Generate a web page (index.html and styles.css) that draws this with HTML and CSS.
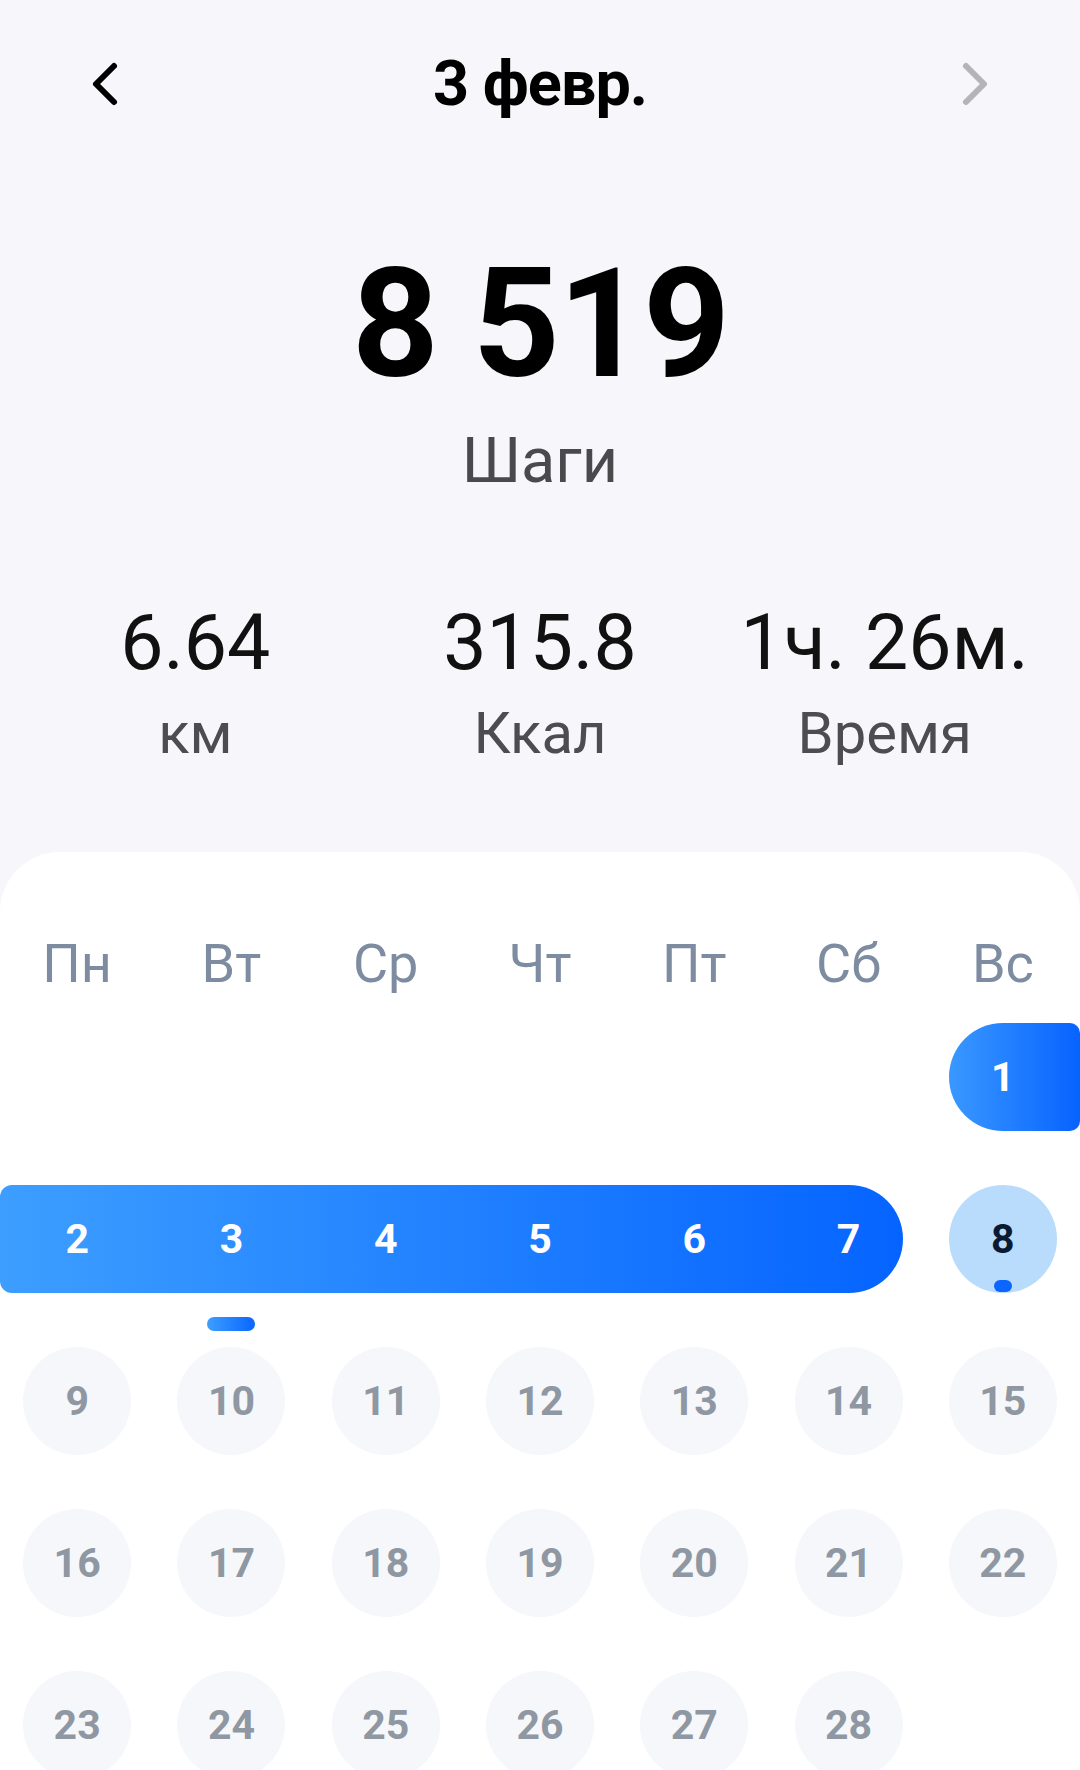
FILE: index.html
```html
<!DOCTYPE html>
<html lang="ru">
<head>
    <meta charset="UTF-8">
    <meta name="viewport" content="width=device-width, initial-scale=1.0">
    <title>Шаги</title>
    <link rel="stylesheet" href="styles.css">
</head>
<body>
    <header class="topbar">
        <button class="nav-arrow">
            <svg width="30" height="46" viewBox="0 0 30 46"><path d="M24 5 L6 23 L24 41" /></svg>
        </button>
        <h1 class="date-title">3 февр.</h1>
        <button class="nav-arrow disabled">
            <svg width="30" height="46" viewBox="0 0 30 46"><path d="M6 5 L24 23 L6 41" /></svg>
        </button>
    </header>

    <section class="summary">
        <div class="steps-count">8 519</div>
        <div class="steps-label">Шаги</div>
    </section>

    <section class="stats">
        <div class="stat">
            <div class="stat-value">6.64</div>
            <div class="stat-label">км</div>
        </div>
        <div class="stat">
            <div class="stat-value">315.8</div>
            <div class="stat-label">Ккал</div>
        </div>
        <div class="stat">
            <div class="stat-value">1ч. 26м.</div>
            <div class="stat-label">Время</div>
        </div>
    </section>

    <section class="calendar">
        <div class="weekdays">
            <span>Пн</span><span>Вт</span><span>Ср</span><span>Чт</span><span>Пт</span><span>Сб</span><span>Вс</span>
        </div>

        <div class="week">
            <div class="range range-tail">
                <div class="day">1</div>
            </div>
        </div>

        <div class="week">
            <div class="range range-head">
                <div class="day">2</div>
                <div class="day selected">3</div>
                <div class="day">4</div>
                <div class="day">5</div>
                <div class="day">6</div>
                <div class="day">7</div>
            </div>
            <div class="day today">8</div>
        </div>

        <div class="week">
            <div class="day empty">9</div>
            <div class="day empty">10</div>
            <div class="day empty">11</div>
            <div class="day empty">12</div>
            <div class="day empty">13</div>
            <div class="day empty">14</div>
            <div class="day empty">15</div>
        </div>

        <div class="week">
            <div class="day empty">16</div>
            <div class="day empty">17</div>
            <div class="day empty">18</div>
            <div class="day empty">19</div>
            <div class="day empty">20</div>
            <div class="day empty">21</div>
            <div class="day empty">22</div>
        </div>

        <div class="week">
            <div class="day empty">23</div>
            <div class="day empty">24</div>
            <div class="day empty">25</div>
            <div class="day empty">26</div>
            <div class="day empty">27</div>
            <div class="day empty">28</div>
        </div>
    </section>
</body>
</html>
```

FILE: styles.css
```css
html, body {
    margin: 0;
    padding: 0;
}
body {
    width: 1080px;
    height: 1770px;
    overflow: hidden;
    background-color: #f7f7fb;
    font-family: Roboto, "Noto Sans", "Liberation Sans", sans-serif;
    color: #000;
}

/* header */
.topbar {
    display: flex;
    align-items: center;
    justify-content: space-between;
    padding: 52px 90px 0;
}
.nav-arrow {
    border: none;
    background: none;
    padding: 0;
    width: 30px;
    height: 46px;
    display: block;
}
.nav-arrow svg {
    display: block;
}
.nav-arrow path {
    fill: none;
    stroke: #000;
    stroke-width: 6;
    stroke-linecap: round;
    stroke-linejoin: round;
}
.nav-arrow.disabled path {
    stroke: #b4b4b9;
}
.date-title {
    margin: 0;
    font-size: 63px;
    line-height: 1;
    font-weight: 700;
    letter-spacing: -1px;
}

/* steps */
.summary {
    text-align: center;
}
.steps-count {
    margin-top: 133px;
    font-size: 152px;
    line-height: 1;
    font-weight: 700;
    letter-spacing: -2px;
}
.steps-label {
    margin-top: 29px;
    font-size: 63px;
    line-height: 1;
    color: #4a4a4c;
}

/* stats row */
.stats {
    display: grid;
    grid-template-columns: repeat(3, 1fr);
    padding: 0 23px;
    margin-top: 113px;
    text-align: center;
}
.stat-value {
    font-size: 77px;
    line-height: 1;
    color: #111;
}
.stat-label {
    margin-top: 22px;
    font-size: 58px;
    line-height: 1;
    color: #4d4d50;
}

/* calendar card */
.calendar {
    box-sizing: border-box;
    margin-top: 90px;
    background-color: #fff;
    border-radius: 60px 60px 0 0;
    padding-top: 84px;
    height: 918px;
    overflow: hidden;
}
.weekdays {
    display: grid;
    grid-template-columns: repeat(7, 1fr);
    text-align: center;
    font-size: 54px;
    line-height: 1;
    color: #7d8ca0;
    padding-top: 1px;
}
.week {
    display: grid;
    grid-template-columns: repeat(7, 1fr);
    height: 108px;
    margin-top: 54px;
}
.weekdays + .week {
    margin-top: 32px;
}
.day {
    position: relative;
    display: flex;
    align-items: center;
    justify-content: center;
    width: 108px;
    height: 108px;
    justify-self: center;
    border-radius: 50%;
    font-size: 41px;
    font-weight: 700;
    line-height: 1;
}
.day.empty {
    background-color: #f6f7fa;
    color: #8f97a2;
}
.day.today {
    background-color: #b9dcfd;
    color: #0b1a33;
}
.day.today::after {
    content: "";
    position: absolute;
    bottom: 1px;
    left: 45px;
    width: 18px;
    height: 12px;
    border-radius: 6px;
    background-color: #0a66ff;
}

/* selected range */
.range {
    background: linear-gradient(90deg, #3d9eff, #0564ff);
    color: #fff;
    height: 108px;
}
.range-head {
    grid-column: 1 / 7;
    margin-right: 23px;
    border-radius: 12px 54px 54px 12px;
    display: grid;
    grid-template-columns: repeat(6, calc((100% + 23px) / 6));
}
.range-tail {
    grid-column: 7 / 8;
    margin-left: 23px;
    border-radius: 54px 10px 10px 54px;
    background: linear-gradient(90deg, #3a98ff, #0763ff);
    display: flex;
    padding-right: 23px;
}
.range .day {
    background: none;
}
.day.selected::after {
    content: "";
    position: absolute;
    top: calc(100% + 24px);
    left: 30px;
    width: 48px;
    height: 14px;
    border-radius: 7px;
    background: linear-gradient(90deg, #3d9eff, #0a66ff);
}
```
